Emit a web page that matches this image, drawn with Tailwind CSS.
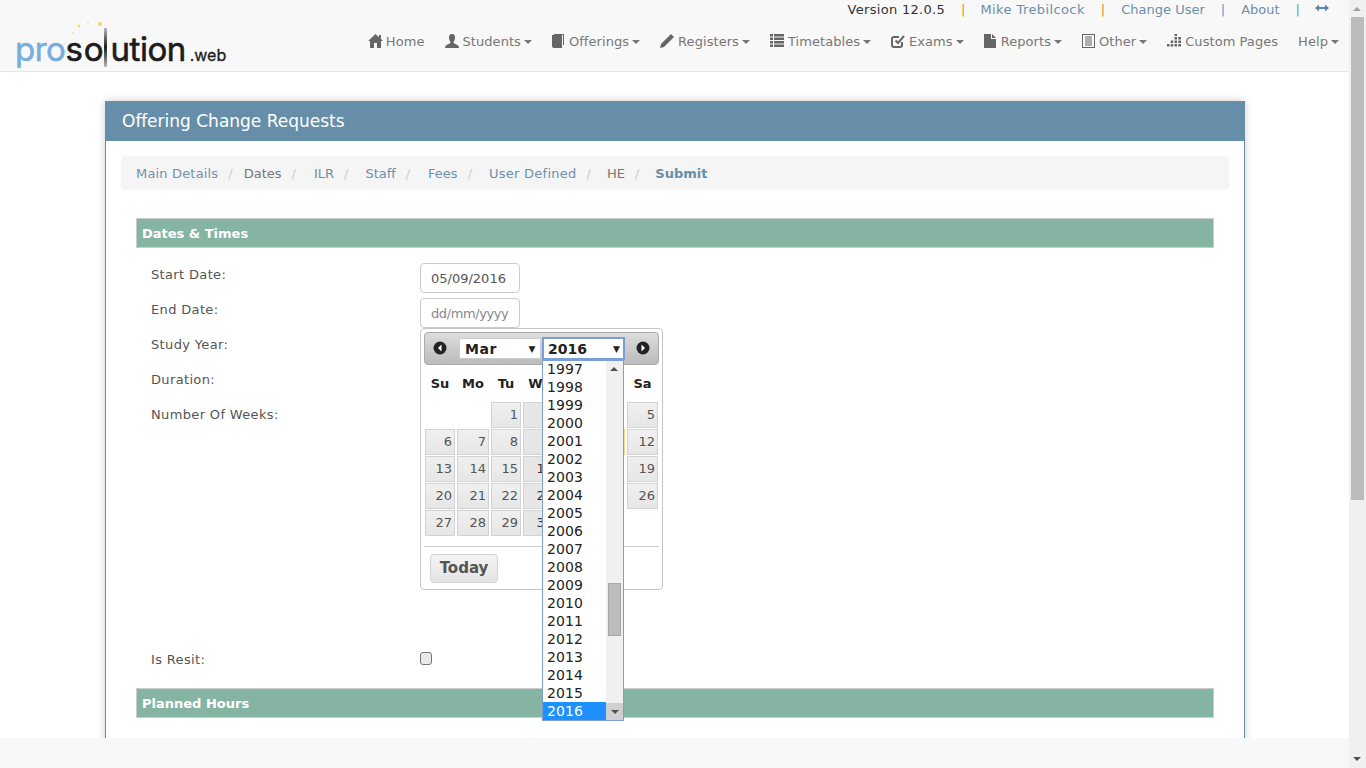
<!DOCTYPE html>
<html lang="en">
<head>
<meta charset="utf-8">
<title>Offering Change Requests</title>
<script src="https://cdn.jsdelivr.net/npm/@tailwindcss/browser@4"></script>
</head>
<body class="m-0 overflow-hidden bg-white">
<div class="flex h-[768px] w-[1366px] overflow-hidden font-['DejaVu_Sans',Verdana,sans-serif] text-[13px] text-[#555]">
  <div class="flex w-[1349px] flex-col">
    <!-- Header -->
    <header class="relative flex h-[72px] shrink-0 justify-between border-b border-[#e7e7e7] bg-[#f8f8f8]">
      <div class="relative ml-[15px] mt-[27px] flex h-[43px] items-baseline font-['Inter',sans-serif] text-[33px] leading-[45px] tracking-[-0.5px] text-[#1c1c1c] [-webkit-text-stroke:0.6px]">
        <svg class="absolute left-[55px] top-[-7px]" width="40" height="16" viewBox="0 0 40 16"><g fill="#f3d64a" stroke="none"><circle cx="3" cy="13" r="0.800"/><circle cx="9" cy="6" r="1.300"/><circle cx="18" cy="3" r="0.700"/><circle cx="30" cy="4" r="1.900"/></g></svg>
        <span class="text-[#78aedd]">pro</span><span class="tracking-[1px]">so</span><span class="ml-[-1px] mr-[4px] mt-[1px] block h-[39px] w-[3px] self-start bg-gradient-to-b from-[#bbb] via-[#222] to-[#bbb]"></span><span>ution</span><span class="ml-[4px] text-[16px] tracking-normal [-webkit-text-stroke:0.3px]">.web</span>
      </div>
      <div class="flex flex-col items-end pr-[10px]">
        <div class="mt-[1px] flex h-[18px] items-center text-[13px] leading-[18px]">
          <span class="tracking-[0.3px] text-[#333]">Version 12.0.5</span>
          <span class="ml-[16px] mr-[15px] text-[#d98f2b]">|</span>
          <span class="tracking-[0.4px] text-[#6d8fab]">Mike Trebilcock</span>
          <span class="mx-[16px] text-[#d98f2b]">|</span>
          <span class="text-[#6d8fab]">Change User</span>
          <span class="mx-[16px] text-[#5b9bd5]">|</span>
          <span class="text-[#6d8fab]">About</span>
          <span class="ml-[16px] mr-[15px] text-[#5b9bd5]">|</span>
          <svg class="mb-[4px] mr-[10px]" width="14" height="8" viewBox="0 0 14 8" fill="#5d87a8"><path d="M0 4 L4 0.500 V3 H10 V0.500 L14 4 L10 7.500 V5 H4 V7.500 Z"/></svg>
        </div>
        <nav class="mt-[14px] flex h-[18px] items-center gap-[20px] whitespace-nowrap leading-[18px] tracking-[0.06px] text-[#777]">
          <span class="flex items-center gap-[3px]"><svg width="15" height="14" viewBox="0 0 15 14" class="mb-[3px]" fill="#666"><path d="M7.500 0 L11 3.200 V1 H13 V5 L15 7 H13 V14 H9 V9 H6 V14 H2 V7 H0 Z"/></svg>Home</span>
          <span class="flex items-center gap-[4px]"><svg width="14" height="14" viewBox="0 0 14 14" class="mb-[3px]" fill="#666"><path d="M7 0 C9.500 0 10.200 2 10 4 C9.800 6 9 7.500 8.500 8 C8.500 9 9 9.500 11 10.200 C13 11 14 12 14 14 H0 C0 12 1 11 3 10.200 C5 9.500 5.500 9 5.500 8 C5 7.500 4.200 6 4 4 C3.800 2 4.500 0 7 0 Z"/></svg><span>Students</span><span class="ml-[-1px] h-0 w-0 border-x-[4px] border-t-[4px] border-x-transparent border-t-[#777]"></span></span>
          <span class="flex items-center gap-[4px]"><svg width="13" height="14" viewBox="0 0 13 14" class="mb-[3px]" fill="#666"><path d="M1 0 H12 V11 H11 V1 H2 V0 Z M0 1 H10 V14 H2 C1 14 0 13 0 12 Z"/></svg><span>Offerings</span><span class="ml-[-1px] h-0 w-0 border-x-[4px] border-t-[4px] border-x-transparent border-t-[#777]"></span></span>
          <span class="flex items-center gap-[4px]"><svg width="14" height="14" viewBox="0 0 14 14" class="mb-[3px]" fill="#666"><path d="M11 0 L14 3 L4 13 L0 14 L1 10 Z"/></svg><span>Registers</span><span class="ml-[-1px] h-0 w-0 border-x-[4px] border-t-[4px] border-x-transparent border-t-[#777]"></span></span>
          <span class="flex items-center gap-[4px]"><svg width="14" height="13" viewBox="0 0 14 13" class="mb-[3px]" fill="#666"><path d="M0 0h3v2.500H0z M4 0h10v2.500H4z M0 3.500h3V6H0z M4 3.500h10V6H4z M0 7h3v2.500H0z M4 7h10v2.500H4z M0 10.500h3V13H0z M4 10.500h10V13H4z"/></svg><span>Timetables</span><span class="ml-[-1px] h-0 w-0 border-x-[4px] border-t-[4px] border-x-transparent border-t-[#777]"></span></span>
          <span class="flex items-center gap-[4px]"><svg width="14" height="14" viewBox="0 0 14 14" class="mb-[3px]" fill="none" stroke="#666" stroke-width="2"><path d="M11 8 V11 C11 12 10 13 9 13 H3 C2 13 1 12 1 11 V5 C1 4 2 3 3 3 H8"/><path d="M4.500 6.500 L7 9 L13 2"/></svg><span>Exams</span><span class="ml-[-1px] h-0 w-0 border-x-[4px] border-t-[4px] border-x-transparent border-t-[#777]"></span></span>
          <span class="flex items-center gap-[5px]"><svg width="12" height="14" viewBox="0 0 12 14" class="mb-[3px]" fill="#666"><path d="M0 0 H7 V5 H12 V14 H0 Z M8 0 L12 4 H8 Z"/></svg><span>Reports</span><span class="ml-[-2px] h-0 w-0 border-x-[4px] border-t-[4px] border-x-transparent border-t-[#777]"></span></span>
          <span class="flex items-center gap-[4px]"><svg width="13" height="14" viewBox="0 0 13 14" class="mb-[3px]" fill="none" stroke="#666"><rect x="0.500" y="0.500" width="12" height="13"/><path d="M3 3h7 M3 5h7 M3 7h7 M3 9h7 M3 11h7" stroke-width="1.200"/></svg><span>Other</span><span class="ml-[-1px] h-0 w-0 border-x-[4px] border-t-[4px] border-x-transparent border-t-[#777]"></span></span>
          <span class="flex items-center gap-[4px]"><svg width="14" height="13" viewBox="0 0 14 13" class="mb-[3px]" fill="#666"><path d="M0 10h2.500v2.500H0z M3.700 10h2.500v2.500H3.700z M3.700 6.500h2.500V9H3.700z M7.500 10h2.500v2.500H7.500z M7.500 6.500h2.500V9H7.500z M7.500 3h2.500v2.500H7.500z M7.500 0h2.500v2H7.500z M11.300 10H14v2.500h-2.700z M11.300 6.500H14V9h-2.700z M11.300 3H14v2.500h-2.700z"/></svg><span>Custom Pages</span></span>
          <span class="flex items-center gap-[3px]"><span>Help</span><span class="h-0 w-0 border-x-[4px] border-t-[4px] border-x-transparent border-t-[#777]"></span></span>
        </nav>
      </div>
    </header>

    <!-- Content -->
    <main class="relative min-h-0 flex-1 overflow-hidden bg-white">
      <section class="ml-[105px] mt-[29px] w-[1140px] border-x border-[#678ea9] bg-white shadow-[0_0_8px_rgba(0,0,0,0.2)]">
        <h1 class="-mx-px flex h-[40px] items-center bg-[#678ea9] pl-[17px] pt-[2px] text-[17px] font-normal text-white">Offering Change Requests</h1>
        <div class="px-[15px] pt-[15px]">
          <ol class="flex h-[34px] items-center rounded-[4px] bg-[#f5f5f5] pl-[15px] pt-[2px] text-[13px]">
            <li class="tracking-[0.17px] text-[#7590a8]">Main Details</li><li class="ml-[10px] mr-[11px] text-[#ccc]">/</li>
            <li class="text-[#777]">Dates</li><li class="ml-[10px] mr-[18px] text-[#ccc]">/</li>
            <li class="text-[#6d8fab]">ILR</li><li class="ml-[10px] mr-[17px] text-[#ccc]">/</li>
            <li class="text-[#6d8fab]">Staff</li><li class="ml-[10px] mr-[18px] text-[#ccc]">/</li>
            <li class="text-[#6d8fab]">Fees</li><li class="ml-[10px] mr-[17px] text-[#ccc]">/</li>
            <li class="tracking-[0.25px] text-[#6d8fab]">User Defined</li><li class="ml-[10px] mr-[16px] text-[#ccc]">/</li>
            <li class="text-[#777]">HE</li><li class="ml-[10px] mr-[16px] text-[#ccc]">/</li>
            <li class="font-bold text-[#678ea9]">Submit</li>
          </ol>
          <div class="px-[15px] pt-[28px]">
            <h2 class="flex h-[30px] items-center border border-[#ccc] bg-[#86b4a3] pl-[5px] pt-[1px] text-[13px] font-bold text-white">Dates &amp; Times</h2>
            <form class="relative mt-[15px]">
              <div class="flex h-[35px] items-start"><label class="w-[284px] pl-[15px] pt-[2px] leading-[20px] tracking-[0.35px]">Start Date:</label><div class="flex h-[30px] w-[100px] items-center rounded-[4px] border border-[#ccc] pl-[10px] pt-[1px] text-[#555]">05/09/2016</div></div>
              <div class="flex h-[35px] items-start"><label class="w-[284px] pl-[15px] pt-[2px] leading-[20px] tracking-[0.35px]">End Date:</label><div class="flex h-[30px] w-[100px] items-center rounded-[4px] border border-[#ccc] pl-[10px] pt-[1px] tracking-[-0.4px] text-[#888]">dd/mm/yyyy</div></div>
              <div class="flex h-[35px] items-start"><label class="w-[284px] pl-[15px] pt-[2px] leading-[20px] tracking-[0.35px]">Study Year:</label></div>
              <div class="flex h-[35px] items-start"><label class="w-[284px] pl-[15px] pt-[2px] leading-[20px] tracking-[0.35px]">Duration:</label></div>
              <div class="flex h-[245px] items-start"><label class="w-[284px] pl-[15px] pt-[2px] leading-[20px] tracking-[0.35px]">Number Of Weeks:</label></div>
              <div class="flex h-[40px] items-start"><label class="w-[284px] pl-[15px] pt-[2px] leading-[20px] tracking-[0.35px]">Is Resit:</label><span class="mt-[4px] h-[13px] w-[12px] rounded-[3px] border border-[#777] bg-[#e9e9e9]"></span></div>

              <!-- Datepicker -->
              <div class="absolute left-[284px] top-[65px] z-10 h-[262px] w-[243px] rounded-[4px] border border-[#c5c5c5] bg-white p-[3px] text-[#333]">
                <div class="relative flex h-[33px] items-center rounded-[4px] border border-[#aaa] bg-gradient-to-b from-[#ddd] to-[#bbb]">
                  <svg class="absolute left-[8px] top-[8px]" width="14" height="14" viewBox="0 0 14 14"><circle cx="7" cy="7" r="6.500" fill="#222"/><path d="M8.500 3.500 L5 7 L8.500 10.500 Z" fill="#fff"/></svg>
                  <div class="absolute left-[34px] top-[5px] flex h-[21px] w-[82px] items-center justify-between border border-[#ccc] bg-white pl-[5px] pr-[4px] pt-[1px] text-[14px] font-bold leading-none tracking-[0.5px] text-[#222]">Mar<span class="text-[9px] font-normal">▼</span></div>
                  <div class="absolute left-[117px] top-[4px] flex h-[23px] w-[83px] items-center justify-between border-2 border-[#7b9ed9] bg-white pl-[4px] pr-[3px] pt-[1px] text-[14px] font-bold leading-none text-[#222]">2016<span class="text-[9px] font-normal">▼</span></div>
                  <svg class="absolute right-[8px] top-[8px]" width="14" height="14" viewBox="0 0 14 14"><circle cx="7" cy="7" r="6.500" fill="#222"/><path d="M5.500 3.500 L9 7 L5.500 10.500 Z" fill="#fff"/></svg>
                </div>
                <div class="ml-[1px] grid grid-cols-[30px_32px_30px_33px_32px_33px_31px] gap-x-[2px] gap-y-[1px]">
                  <div class="col-span-7 grid h-[36px] grid-cols-[30px_32px_30px_33px_32px_33px_31px] items-center gap-x-[2px] pt-[1px] text-center font-bold text-[#222]">
                    <span>Su</span><span>Mo</span><span>Tu</span><span>We</span><span>Th</span><span>Fr</span><span>Sa</span>
                  </div>
                  <span></span><span></span>
                  <span class="flex h-[26px] items-center justify-end border border-[#d3d3d3] bg-gradient-to-b from-[#f0f0f0] to-[#e6e6e6] pr-[2px] text-[#555]">1</span>
                  <span class="flex h-[26px] items-center justify-end border border-[#d3d3d3] bg-[#e6e6e6] pr-[2px]">2</span><span></span><span></span>
                  <span class="flex h-[26px] items-center justify-end border border-[#d3d3d3] bg-gradient-to-b from-[#f0f0f0] to-[#e6e6e6] pr-[2px] text-[#555]">5</span>
                  <span class="flex h-[26px] items-center justify-end border border-[#d3d3d3] bg-gradient-to-b from-[#f0f0f0] to-[#e6e6e6] pr-[2px] text-[#555]">6</span>
                  <span class="flex h-[26px] items-center justify-end border border-[#d3d3d3] bg-gradient-to-b from-[#f0f0f0] to-[#e6e6e6] pr-[2px] text-[#555]">7</span>
                  <span class="flex h-[26px] items-center justify-end border border-[#d3d3d3] bg-gradient-to-b from-[#f0f0f0] to-[#e6e6e6] pr-[2px] text-[#555]">8</span>
                  <span class="flex h-[26px] items-center justify-end border border-[#d3d3d3] bg-[#e6e6e6] pr-[2px]">9</span><span></span>
                  <span class="h-[26px] border-r-2 border-[#f3dd8a]"></span>
                  <span class="flex h-[26px] items-center justify-end border border-[#d3d3d3] bg-gradient-to-b from-[#f0f0f0] to-[#e6e6e6] pr-[2px] text-[#555]">12</span>
                  <span class="flex h-[26px] items-center justify-end border border-[#d3d3d3] bg-gradient-to-b from-[#f0f0f0] to-[#e6e6e6] pr-[2px] text-[#555]">13</span>
                  <span class="flex h-[26px] items-center justify-end border border-[#d3d3d3] bg-gradient-to-b from-[#f0f0f0] to-[#e6e6e6] pr-[2px] text-[#555]">14</span>
                  <span class="flex h-[26px] items-center justify-end border border-[#d3d3d3] bg-gradient-to-b from-[#f0f0f0] to-[#e6e6e6] pr-[2px] text-[#555]">15</span>
                  <span class="flex h-[26px] items-center justify-end border border-[#d3d3d3] bg-[#e6e6e6] pr-[2px]">16</span><span></span><span></span>
                  <span class="flex h-[26px] items-center justify-end border border-[#d3d3d3] bg-gradient-to-b from-[#f0f0f0] to-[#e6e6e6] pr-[2px] text-[#555]">19</span>
                  <span class="flex h-[26px] items-center justify-end border border-[#d3d3d3] bg-gradient-to-b from-[#f0f0f0] to-[#e6e6e6] pr-[2px] text-[#555]">20</span>
                  <span class="flex h-[26px] items-center justify-end border border-[#d3d3d3] bg-gradient-to-b from-[#f0f0f0] to-[#e6e6e6] pr-[2px] text-[#555]">21</span>
                  <span class="flex h-[26px] items-center justify-end border border-[#d3d3d3] bg-gradient-to-b from-[#f0f0f0] to-[#e6e6e6] pr-[2px] text-[#555]">22</span>
                  <span class="flex h-[26px] items-center justify-end border border-[#d3d3d3] bg-[#e6e6e6] pr-[2px]">23</span><span></span><span></span>
                  <span class="flex h-[26px] items-center justify-end border border-[#d3d3d3] bg-gradient-to-b from-[#f0f0f0] to-[#e6e6e6] pr-[2px] text-[#555]">26</span>
                  <span class="flex h-[26px] items-center justify-end border border-[#d3d3d3] bg-gradient-to-b from-[#f0f0f0] to-[#e6e6e6] pr-[2px] text-[#555]">27</span>
                  <span class="flex h-[26px] items-center justify-end border border-[#d3d3d3] bg-gradient-to-b from-[#f0f0f0] to-[#e6e6e6] pr-[2px] text-[#555]">28</span>
                  <span class="flex h-[26px] items-center justify-end border border-[#d3d3d3] bg-gradient-to-b from-[#f0f0f0] to-[#e6e6e6] pr-[2px] text-[#555]">29</span>
                  <span class="flex h-[26px] items-center justify-end border border-[#d3d3d3] bg-[#e6e6e6] pr-[2px]">30</span>
                </div>
                <div class="mt-[10px] border-t border-[#ccc] pl-[6px] pt-[7px]">
                  <div class="flex h-[29px] w-[68px] items-center justify-center rounded-[4px] border border-[#d3d3d3] bg-gradient-to-b from-[#f4f4f4] to-[#e4e4e4] text-[15px] font-bold text-[#555]">Today</div>
                </div>
                <!-- Year list -->
                <div class="absolute left-[121px] top-[31px] z-20 flex h-[361px] w-[82px] border border-[#7b9ed9] bg-white text-[14px] leading-[18px] tracking-[0.1px] text-[#222]">
                  <ul class="-mt-px w-[63px]">
                    <li class="pl-[4px]">1997</li><li class="pl-[4px]">1998</li><li class="pl-[4px]">1999</li><li class="pl-[4px]">2000</li><li class="pl-[4px]">2001</li><li class="pl-[4px]">2002</li><li class="pl-[4px]">2003</li><li class="pl-[4px]">2004</li><li class="pl-[4px]">2005</li><li class="pl-[4px]">2006</li><li class="pl-[4px]">2007</li><li class="pl-[4px]">2008</li><li class="pl-[4px]">2009</li><li class="pl-[4px]">2010</li><li class="pl-[4px]">2011</li><li class="pl-[4px]">2012</li><li class="pl-[4px]">2013</li><li class="pl-[4px]">2014</li><li class="pl-[4px]">2015</li><li class="bg-[#1e90ff] pl-[4px] text-white">2016</li>
                  </ul>
                  <div class="relative w-[17px] bg-[#f0f0f0]">
                    <span class="absolute left-[4px] top-[6px] h-0 w-0 border-x-[4px] border-b-[4px] border-x-transparent border-b-[#505050]"></span>
                    <span class="absolute left-[2px] top-[222px] h-[53px] w-[13px] border border-[#a8a8a8] bg-[#bcbcbc]"></span>
                    <span class="absolute bottom-0 left-0 flex h-[17px] w-[17px] items-center justify-center bg-[#d0d0d0]"><span class="h-0 w-0 border-x-[4px] border-t-[4px] border-x-transparent border-t-[#505050]"></span></span>
                  </div>
                </div>
              </div>
            </form>
            <h2 class="flex h-[30px] items-center border border-[#ccc] bg-[#86b4a3] pl-[5px] pt-[1px] text-[13px] font-bold text-white">Planned Hours</h2>
            <div class="h-[80px]"></div>
          </div>
        </div>
      </section>
    </main>
    <footer class="h-[30px] shrink-0 bg-[#f8f8f8]"></footer>
  </div>

  <!-- Scrollbar -->
  <div class="relative h-[768px] w-[17px] shrink-0 bg-[#f0f0f0]">
    <span class="absolute left-[4px] top-[7px] h-0 w-0 border-x-[4px] border-b-[4px] border-x-transparent border-b-[#a0a0a0]"></span>
    <span class="absolute left-[2px] top-[17px] h-[483px] w-[13px] bg-[#bcbcbc]"></span>
    <span class="absolute bottom-[7px] left-[4px] h-0 w-0 border-x-[4px] border-t-[4px] border-x-transparent border-t-[#505050]"></span>
  </div>
</div>
</body>
</html>
